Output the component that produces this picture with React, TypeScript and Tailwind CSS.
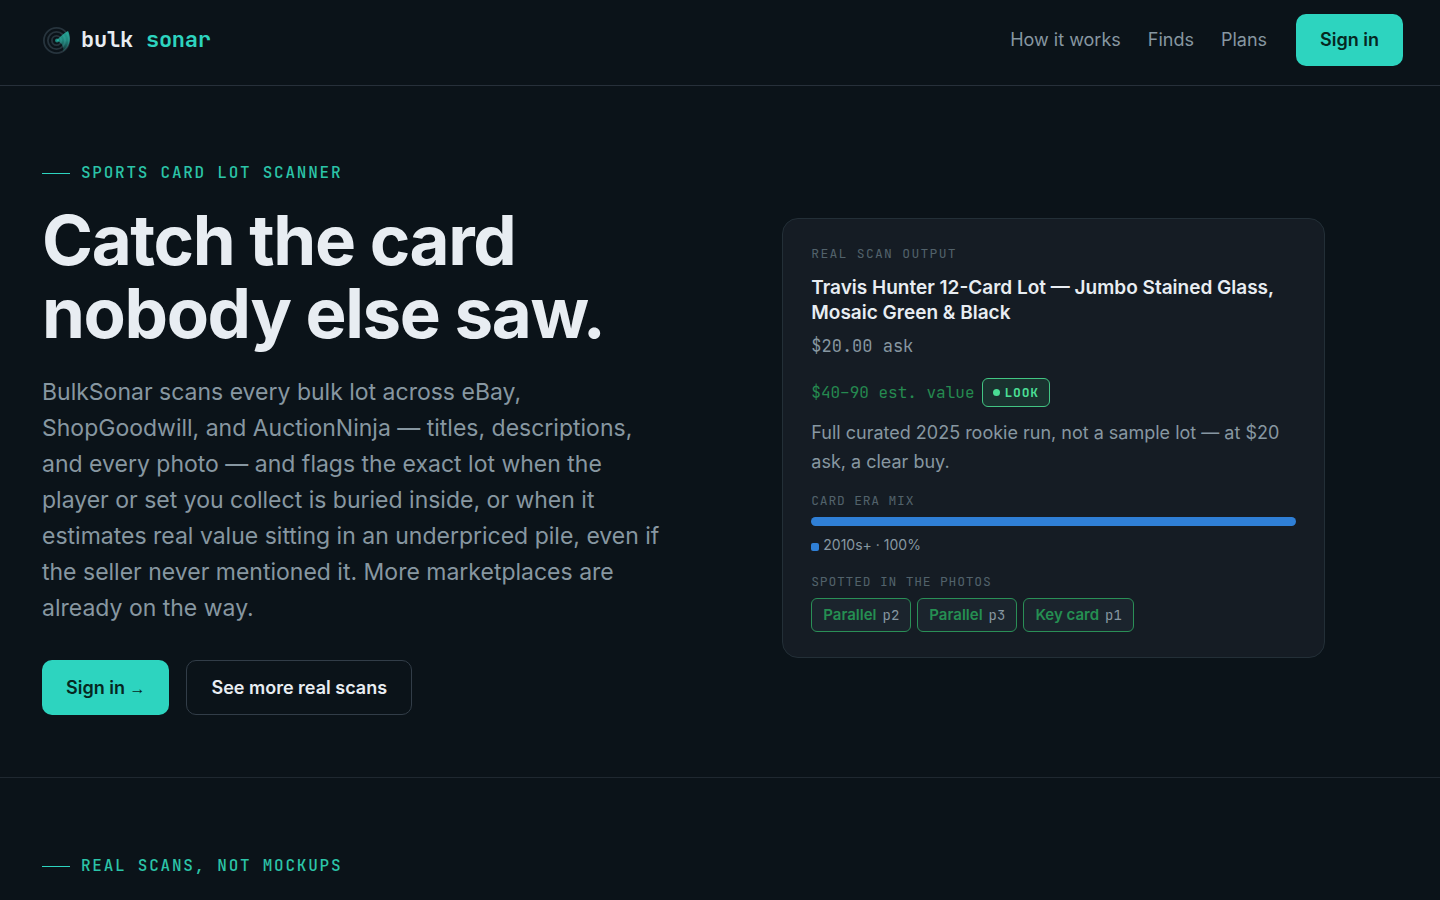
import React from 'react'

// Single player/parallel tag found in one of the lot photos
interface SpottedTag {
    label: string
    photo: string
}

const navLinks = [
    { label: 'How it works', href: '#how' },
    { label: 'Finds', href: '#finds' },
    { label: 'Plans', href: '#plans' }
]

const spotted: SpottedTag[] = [
    { label: 'Parallel', photo: 'p2' },
    { label: 'Parallel', photo: 'p3' },
    { label: 'Key card', photo: 'p1' }
]

const eras = [{ name: '2010s+', percent: 100 }]

// Radar mark: three rings with a sweep wedge
const SonarLogo = () => (
    <svg className="size-7" viewBox="0 0 28 28" fill="none" aria-hidden="true">
        <defs>
            <linearGradient id="sweep" x1="22" y1="3" x2="20" y2="25" gradientUnits="userSpaceOnUse">
                <stop stopColor="#2dd4bf" stopOpacity="0.75" />
                <stop offset="0.5" stopColor="#2dd4bf" stopOpacity="0.6" />
                <stop offset="1" stopColor="#2dd4bf" stopOpacity="0.15" />
            </linearGradient>
        </defs>
        <g stroke="#27343d" strokeWidth="1.8">
            <circle cx="14.5" cy="14.5" r="12.6" />
            <circle cx="14.5" cy="14.5" r="8.6" />
            <circle cx="14.5" cy="14.5" r="4.6" />
        </g>
        <path d="M14.5 14.5C17.5 11 21.5 7.5 26 5C29.4 12 28.2 20.5 21 25.4C22 21.5 20.5 17 14.5 14.5Z" fill="url(#sweep)" />
        <circle cx="15" cy="14.5" r="1.9" fill="#2dd4bf" fillOpacity="0.6" />
    </svg>
)

const Eyebrow = ({ children }: { children: React.ReactNode }) => (
    <p className="flex items-center gap-[11px] font-[JetBrains_Mono,DejaVu_Sans_Mono,monospace] text-[16px] leading-6 font-medium tracking-[0.11em] text-[#2bc4a8] uppercase">
        <span className="h-px w-7 bg-[#2dd4bf]" />
        {children}
    </p>
)

const CardLabel = ({ children }: { children: React.ReactNode }) => (
    <h3 className="font-[JetBrains_Mono,DejaVu_Sans_Mono,monospace] text-[13px] leading-5 tracking-[0.06em] text-[#52626b] uppercase">
        {children}
    </h3>
)

const Header = () => (
    <header className="flex items-center justify-between border-b border-[#27303a] pt-3.5 pr-[37px] pb-[19px] pl-[42px]">
        <a href="#top" className="flex items-center gap-[11px] font-[JetBrains_Mono,DejaVu_Sans_Mono,monospace] text-[22px] leading-8 font-bold tracking-[-0.01em] text-[#e8edf2]">
            <SonarLogo />
            <span>
                bulk <span className="text-[#2dd4bf]">sonar</span>
            </span>
        </a>
        <nav className="flex items-center gap-[27px] text-[18px] leading-7 text-[#8797a1]">
            {navLinks.map((link) => (
                <a key={link.label} href={link.href}>
                    {link.label}
                </a>
            ))}
            <button type="button" className="ml-0.5 h-[52px] rounded-[10px] bg-[#2dd4bf] px-6 font-semibold text-[#06281f]">
                Sign in
            </button>
        </nav>
    </header>
)

const ScanCard = () => (
    <article className="w-full max-w-[543px] rounded-2xl border border-[#232f37] bg-[#151c24] px-7 py-[25px]">
        <p className="font-[JetBrains_Mono,DejaVu_Sans_Mono,monospace] text-[13px] leading-5 tracking-[0.1em] text-[#52626b] uppercase">
            Real scan output
        </p>
        <h2 className="mt-[11px] text-[19px] leading-[25px] font-semibold text-[#e8edf2]">
            Travis Hunter 12-Card Lot — Jumbo Stained Glass, Mosaic Green &amp; Black
        </h2>
        <p className="mt-[9px] font-[JetBrains_Mono,DejaVu_Sans_Mono,monospace] text-[17px] leading-6 text-[#8797a1]">$20.00 ask</p>
        <div className="mt-5 flex items-center gap-2">
            <span className="font-[JetBrains_Mono,DejaVu_Sans_Mono,monospace] text-[16px] leading-6 text-[#258a50]">$40–90 est. value</span>
            <span className="flex h-[29px] items-center gap-1 rounded-md border border-[#42c583] bg-[#1a322f] px-2.5 font-[JetBrains_Mono,DejaVu_Sans_Mono,monospace] text-[13px] font-bold tracking-[0.06em] text-[#4ade94]">
                <span className="size-[7px] rounded-full bg-[#4ade94]" />
                LOOK
            </span>
        </div>
        <p className="mt-[11px] text-[18px] leading-[29px] text-[#8797a1]">
            Full curated 2025 rookie run, not a sample lot — at $20 ask, a clear buy.
        </p>
        <div className="mt-[15px]">
            <CardLabel>Card era mix</CardLabel>
            <div className="mt-1.5 flex h-[9px] overflow-hidden rounded-full bg-[#232d37]">
                {eras.map((era) => (
                    <div key={era.name} className="bg-[#2f7fd6]" style={{ width: `${era.percent}%` }} />
                ))}
            </div>
            {eras.map((era) => (
                <p key={era.name} className="mt-[9px] flex items-center gap-1 text-[14px] leading-5 text-[#8797a1]">
                    <span className="mt-1 size-2 rounded-xs bg-[#2f7fd6]" />
                    {era.name} · {era.percent}%
                </p>
            ))}
        </div>
        <div className="mt-[17px]">
            <CardLabel>Spotted in the photos</CardLabel>
            <ul className="mt-1.5 flex flex-wrap gap-1.5">
                {spotted.map((tag) => (
                    <li key={tag.photo} className="flex h-[34px] items-center gap-1.5 rounded-md border border-[#2a8f57] bg-[#1b242d] px-[11px] text-[15px] font-semibold text-[#258f52]">
                        {tag.label}
                        <span className="font-[JetBrains_Mono,DejaVu_Sans_Mono,monospace] text-[14px] font-normal text-[#8797a1]">{tag.photo}</span>
                    </li>
                ))}
            </ul>
        </div>
    </article>
)

const Hero = () => (
    <section className="grid grid-cols-1 items-center gap-12 border-b border-[#1f2830] px-[42px] pt-[75px] pb-[62px] lg:grid-cols-[9fr_10fr]">
        <div>
            <Eyebrow>Sports card lot scanner</Eyebrow>
            <h1 className="mt-[19px] text-[69px] leading-[73px] font-bold tracking-[-0.02em] text-[#e8edf2]">
                Catch the card nobody else saw.
            </h1>
            <p className="mt-6 text-[23px] leading-9 text-[#8797a1]">
                BulkSonar scans every bulk lot across eBay, ShopGoodwill, and AuctionNinja — titles, descriptions, and every
                photo — and flags the exact lot when the player or set you collect is buried inside, or when it estimates real
                value sitting in an underpriced pile, even if the seller never mentioned it. More marketplaces are already on
                the way.
            </p>
            <div className="mt-[34px] flex flex-wrap gap-[17px] text-[18px] font-semibold">
                <button type="button" className="h-[55px] rounded-[10px] bg-[#2dd4bf] px-6 text-[#06281f]">
                    Sign in <span className="font-[Liberation_Sans,sans-serif] text-[16px]">→</span>
                </button>
                <button type="button" className="h-[55px] rounded-[10px] border border-[#323d48] px-6 text-[#e8edf2]">
                    See more real scans
                </button>
            </div>
        </div>
        <div className="flex justify-center">
            <ScanCard />
        </div>
    </section>
)

const App = () => (
    <div id="top" className="min-h-screen bg-[#0b1319] font-[Inter,sans-serif]">
        <Header />
        <main>
            <Hero />
            <section id="finds" className="px-[42px] pt-[76px]">
                <Eyebrow>Real scans, not mockups</Eyebrow>
            </section>
        </main>
    </div>
)

export default App
